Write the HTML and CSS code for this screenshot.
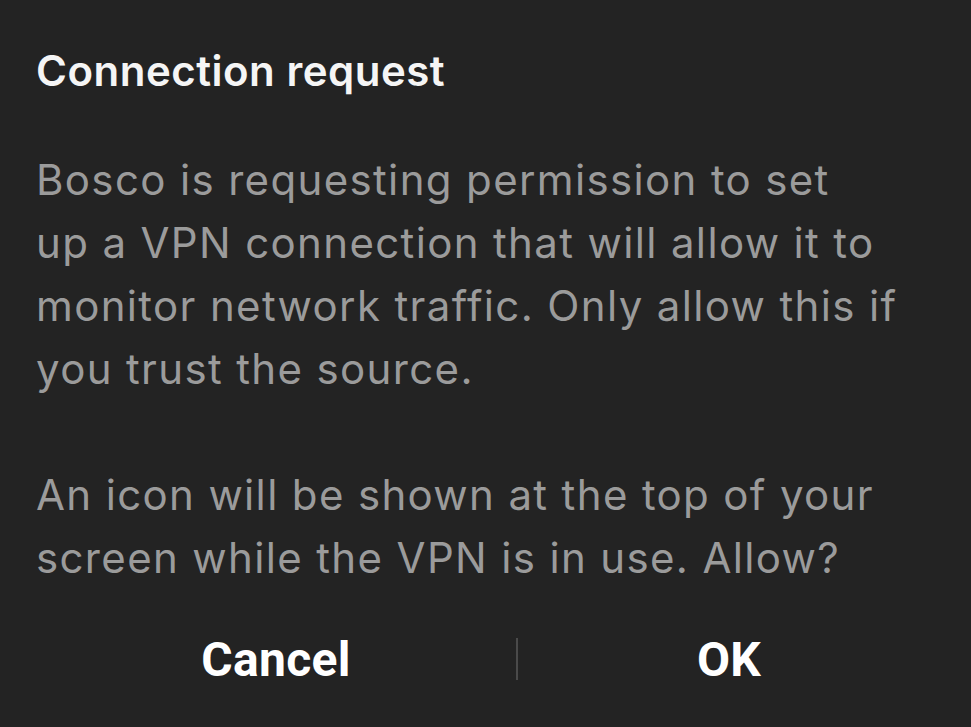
FILE: index.html
```html
<!DOCTYPE html>
<html lang="en">
<head>
<meta charset="utf-8">
<link rel="stylesheet" href="styles.css">
</head>
<body>
<div class="dialog">
  <h1 class="title">Connection request</h1>
  <p class="body">Bosco is requesting permission to set<br>up a VPN connection that will allow it to<br>monitor network traffic. Only allow this if<br>you trust the source.</p>
  <p class="body second">An icon will be shown at the top of your<br>screen while the VPN is in use. Allow?</p>
  <div class="actions">
    <button class="btn">Cancel</button>
    <span class="divider"></span>
    <button class="btn">OK</button>
  </div>
</div>
</body>
</html>
```

FILE: styles.css
```css
html, body {
  margin: 0;
  padding: 0;
  background: #232323;
  height: 100%;
}
.dialog {
  width: 971px;
  height: 727px;
  box-sizing: border-box;
  padding: 44px 20px 0 36px;
  font-family: Inter, "Noto Sans", sans-serif;
}
.title {
  margin: 0;
  font-size: 42px;
  font-weight: 600;
  line-height: 54px;
  color: #f5f5f5;
  letter-spacing: 0.5px;
}
.body {
  margin: 0;
  font-size: 42px;
  line-height: 63px;
  color: #9b9b9b;
  font-weight: 400;
  letter-spacing: 1.35px;
  white-space: nowrap;
}
.body:first-of-type {
  margin-top: 50px;
}
.body.second {
  margin-top: 63px;
}
.actions {
  display: grid;
  grid-template-columns: 480px 2px 422px;
  align-items: center;
  margin-top: 30px;
  height: 80px;
}
.btn {
  background: none;
  border: none;
  padding: 0;
  color: #ffffff;
  font-family: Roboto, Inter, sans-serif;
  font-size: 48px;
  font-weight: 700;
  letter-spacing: 0.3px;
  text-align: center;
}
.divider {
  width: 2px;
  height: 42px;
  background: #4a4a4a;
  justify-self: center;
}
```
